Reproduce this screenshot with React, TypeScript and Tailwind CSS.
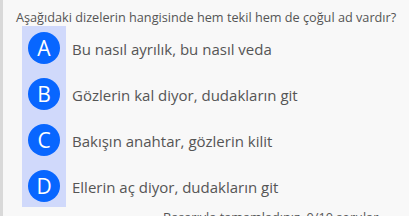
const options = [
  { key: 'A', text: 'Bu nasıl ayrılık, bu nasıl veda' },
  { key: 'B', text: 'Gözlerin kal diyor, dudakların git' },
  { key: 'C', text: 'Bakışın anahtar, gözlerin kilit' },
  { key: 'D', text: 'Ellerin aç diyor, dudakların git' },
];

export default function App() {
  return (
    <div className="flex h-[216px] w-[409px] overflow-hidden bg-[#f8f8f8] font-['Open_Sans',sans-serif] text-[#555]">
      <div className="w-[3px] shrink-0 bg-[#d9d9d9]" />
      <div className="flex min-w-0 flex-1 flex-col pl-[13px]">
        <div className="mt-[1px] h-[2px] bg-[#2f7ff0]" />
        <p className="mt-[7px] whitespace-nowrap text-[12.7px] leading-[18px]">
          Aşağıdaki dizelerin hangisinde hem tekil hem de çoğul ad vardır?
        </p>
        <div className="flex">
          <div className="ml-[6px] flex w-[44px] flex-col gap-[8px] bg-[#d0d9fb] pt-[3px] pb-[2px]">
            {options.map((o) => (
              <div key={o.key} className="flex h-[38px] items-center justify-center">
                <div className="flex h-[32px] w-[32px] items-center justify-center rounded-full bg-[#0866ff] text-[21px] leading-none text-white">
                  {o.key}
                </div>
              </div>
            ))}
          </div>
          <div className="flex flex-col gap-[8px] pt-[4px] pl-[6px]">
            {options.map((o) => (
              <div key={o.key} className="flex h-[38px] items-center whitespace-nowrap text-[15px]">
                {o.text}
              </div>
            ))}
          </div>
        </div>
        <p className="mt-[1px] pl-[147px] whitespace-nowrap text-[12.7px] leading-[18px]">
          Başarıyla tamamladınız. 0/10 sorular
        </p>
      </div>
    </div>
  );
}
